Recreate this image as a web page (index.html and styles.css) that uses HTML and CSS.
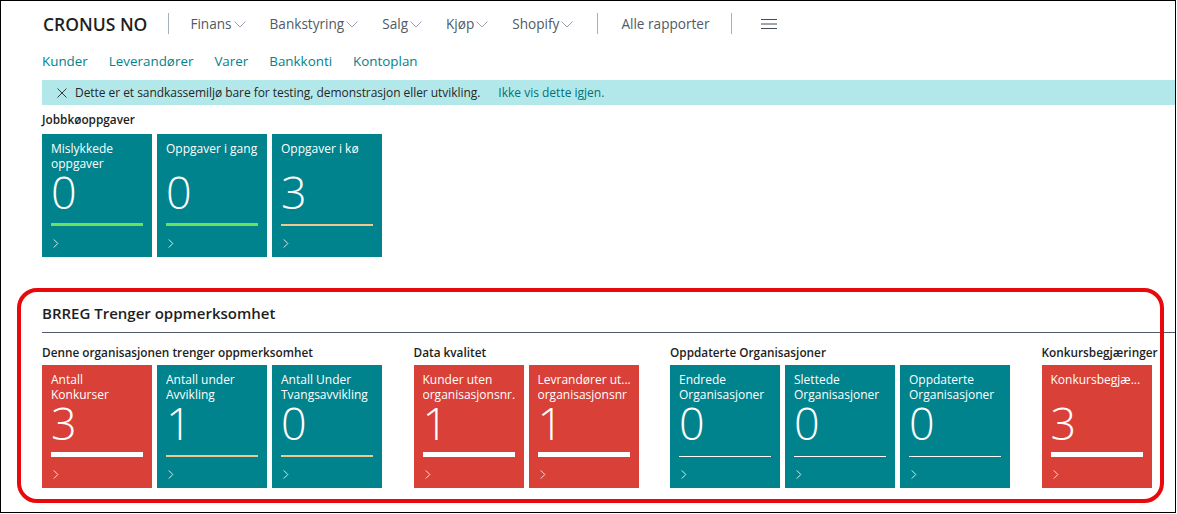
FILE: index.html
```html
<!DOCTYPE html>
<html lang="no">
<head>
<meta charset="utf-8">
<title>CRONUS NO - Rollesenter</title>
<link rel="stylesheet" href="styles.css">
</head>
<body>
<div class="frame">
  <header class="topnav">
    <span class="brand">CRONUS NO</span>
    <span class="sep"></span>
    <nav class="menu">
      <span class="menu-item">Finans<svg class="chev" viewBox="0 0 12 7"><path d="M0.5 0.5 L6 6 L11.5 0.5"/></svg></span>
      <span class="menu-item">Bankstyring<svg class="chev" viewBox="0 0 12 7"><path d="M0.5 0.5 L6 6 L11.5 0.5"/></svg></span>
      <span class="menu-item">Salg<svg class="chev" viewBox="0 0 12 7"><path d="M0.5 0.5 L6 6 L11.5 0.5"/></svg></span>
      <span class="menu-item">Kjøp<svg class="chev" viewBox="0 0 12 7"><path d="M0.5 0.5 L6 6 L11.5 0.5"/></svg></span>
      <span class="menu-item">Shopify<svg class="chev" viewBox="0 0 12 7"><path d="M0.5 0.5 L6 6 L11.5 0.5"/></svg></span>
    </nav>
    <span class="sep"></span>
    <span class="menu-item reports">Alle rapporter</span>
    <span class="sep"></span>
    <span class="hamburger"><svg viewBox="0 0 16 10"><path d="M0 0.5 H16 M0 5 H16 M0 9.5 H16"/></svg></span>
  </header>

  <nav class="quicklinks">
    <a class="ql">Kunder</a>
    <a class="ql">Leverandører</a>
    <a class="ql">Varer</a>
    <a class="ql">Bankkonti</a>
    <a class="ql">Kontoplan</a>
  </nav>

  <div class="banner">
    <svg class="banner-x" viewBox="0 0 10 10"><path d="M0.5 0.5 L9.5 9.5 M9.5 0.5 L0.5 9.5"/></svg>
    <span class="banner-text">Dette er et sandkassemiljø bare for testing, demonstrasjon eller utvikling.</span>
    <a class="banner-link">Ikke vis dette igjen.</a>
  </div>

  <section class="jobq">
    <h2 class="group-title">Jobbkøoppgaver</h2>
    <div class="tiles">
      <div class="tile teal">
        <div class="tile-label">Mislykkede oppgaver</div>
        <div class="tile-value">0</div>
        <div class="tile-meter"><span class="bar green"></span></div>
        <div class="tile-go"><svg viewBox="0 0 6 10"><path d="M0.5 0.5 L5 5 L0.5 9.5"/></svg></div>
      </div>
      <div class="tile teal">
        <div class="tile-label">Oppgaver i gang</div>
        <div class="tile-value">0</div>
        <div class="tile-meter"><span class="bar green"></span></div>
        <div class="tile-go"><svg viewBox="0 0 6 10"><path d="M0.5 0.5 L5 5 L0.5 9.5"/></svg></div>
      </div>
      <div class="tile teal">
        <div class="tile-label">Oppgaver i kø</div>
        <div class="tile-value">3</div>
        <div class="tile-meter"><span class="bar tan"></span></div>
        <div class="tile-go"><svg viewBox="0 0 6 10"><path d="M0.5 0.5 L5 5 L0.5 9.5"/></svg></div>
      </div>
    </div>
  </section>

  <section class="brreg">
    <h1 class="part-title">BRREG Trenger oppmerksomhet</h1>
    <div class="groups">
      <div class="group">
        <h2 class="group-title">Denne organisasjonen trenger oppmerksomhet</h2>
        <div class="tiles">
          <div class="tile red">
            <div class="tile-label">Antall Konkurser</div>
            <div class="tile-value">3</div>
            <div class="tile-meter"><span class="bar white-thick"></span></div>
            <div class="tile-go"><svg viewBox="0 0 6 10"><path d="M0.5 0.5 L5 5 L0.5 9.5"/></svg></div>
          </div>
          <div class="tile teal">
            <div class="tile-label">Antall under Avvikling</div>
            <div class="tile-value">1</div>
            <div class="tile-meter"><span class="bar tan"></span></div>
            <div class="tile-go"><svg viewBox="0 0 6 10"><path d="M0.5 0.5 L5 5 L0.5 9.5"/></svg></div>
          </div>
          <div class="tile teal">
            <div class="tile-label">Antall Under Tvangsavvikling</div>
            <div class="tile-value">0</div>
            <div class="tile-meter"><span class="bar tan"></span></div>
            <div class="tile-go"><svg viewBox="0 0 6 10"><path d="M0.5 0.5 L5 5 L0.5 9.5"/></svg></div>
          </div>
        </div>
      </div>
      <div class="group">
        <h2 class="group-title">Data kvalitet</h2>
        <div class="tiles">
          <div class="tile red">
            <div class="tile-label">Kunder uten organisasjonsnr.</div>
            <div class="tile-value">1</div>
            <div class="tile-meter"><span class="bar white-thick"></span></div>
            <div class="tile-go"><svg viewBox="0 0 6 10"><path d="M0.5 0.5 L5 5 L0.5 9.5"/></svg></div>
          </div>
          <div class="tile red">
            <div class="tile-label"><span class="line">Levrandører ut...</span><span class="line">organisasjonsnr</span></div>
            <div class="tile-value">1</div>
            <div class="tile-meter"><span class="bar white-thick"></span></div>
            <div class="tile-go"><svg viewBox="0 0 6 10"><path d="M0.5 0.5 L5 5 L0.5 9.5"/></svg></div>
          </div>
        </div>
      </div>
      <div class="group">
        <h2 class="group-title">Oppdaterte Organisasjoner</h2>
        <div class="tiles">
          <div class="tile teal">
            <div class="tile-label">Endrede Organisasjoner</div>
            <div class="tile-value">0</div>
            <div class="tile-meter"><span class="bar white-thin"></span></div>
            <div class="tile-go"><svg viewBox="0 0 6 10"><path d="M0.5 0.5 L5 5 L0.5 9.5"/></svg></div>
          </div>
          <div class="tile teal">
            <div class="tile-label">Slettede Organisasjoner</div>
            <div class="tile-value">0</div>
            <div class="tile-meter"><span class="bar white-thin"></span></div>
            <div class="tile-go"><svg viewBox="0 0 6 10"><path d="M0.5 0.5 L5 5 L0.5 9.5"/></svg></div>
          </div>
          <div class="tile teal">
            <div class="tile-label">Oppdaterte Organisasjoner</div>
            <div class="tile-value">0</div>
            <div class="tile-meter"><span class="bar white-thin"></span></div>
            <div class="tile-go"><svg viewBox="0 0 6 10"><path d="M0.5 0.5 L5 5 L0.5 9.5"/></svg></div>
          </div>
        </div>
      </div>
      <div class="group">
        <h2 class="group-title">Konkursbegjæringer</h2>
        <div class="tiles">
          <div class="tile red">
            <div class="tile-label"><span class="line">Konkursbegjæ...</span></div>
            <div class="tile-value">3</div>
            <div class="tile-meter"><span class="bar white-thick"></span></div>
            <div class="tile-go"><svg viewBox="0 0 6 10"><path d="M0.5 0.5 L5 5 L0.5 9.5"/></svg></div>
          </div>
        </div>
      </div>
    </div>
  </section>

  <div class="highlight"></div>
</div>
</body>
</html>
```

FILE: styles.css
```css
* { box-sizing: border-box; }
html, body { margin: 0; padding: 0; background: #fff; }
body {
  font-family: "Open Sans", "Noto Sans", sans-serif;
  color: #212121;
  overflow: hidden;
}
.frame {
  position: relative;
  width: 1176px;
  height: 513px;
  border: 1px solid #000;
  padding-left: 41px;
  overflow: hidden;
}

/* top navigation */
.topnav {
  display: flex;
  align-items: center;
  height: 45px;
  padding-left: 1px;
}
.brand {
  font-size: 17.5px;
  font-weight: 600;
  color: #1f1f1f;
}
.sep {
  width: 1px;
  height: 21px;
  background: #a9b0b9;
  margin: 0 21px 0 21px;
}
.menu { display: flex; align-items: center; gap: 24px; }
.menu-item {
  display: inline-flex;
  align-items: center;
  font-size: 13.6px;
  color: #505a66;
}
.chev {
  width: 12px;
  height: 7px;
  margin-left: 2px;
  margin-top: 1px;
  fill: none;
  stroke: #9aa6b5;
  stroke-width: 1;
}
.menu + .sep { margin-left: 24px; margin-right: 23px; }
.hamburger { display: inline-flex; margin-left: 8px; }
.hamburger svg {
  width: 16px;
  height: 10px;
  fill: none;
  stroke: #444c56;
  stroke-width: 1;
}

/* quick links */
.quicklinks {
  display: flex;
  gap: 21px;
  height: 29px;
  align-items: center;
}
.ql {
  font-size: 13.4px;
  color: #00828c;
}

/* banner */
.banner {
  margin-top: 5px;
  height: 25px;
  background: #b3e8ea;
  display: flex;
  align-items: center;
  padding-left: 15px;
  font-size: 12px;
}
.banner-x {
  width: 10px;
  height: 10px;
  fill: none;
  stroke: #3a3a3a;
  stroke-width: 1;
  margin-right: 8px;
}
.banner-text { color: #262626; letter-spacing: -0.05px; }
.banner-link { color: #00727b; margin-left: 18px; }

/* groups and tiles */
.group-title {
  margin: 0;
  font-size: 11.8px;
  font-weight: 600;
  line-height: 18px;
  color: #1e1e1e;
  white-space: nowrap;
}
.jobq { padding-top: 5px; }
.jobq .group-title { margin-bottom: 6px; }
.tiles { display: flex; gap: 5px; }
.tile {
  width: 110px;
  height: 123px;
  padding: 7px 9px 0;
  color: #fff;
  display: flex;
  flex-direction: column;
}
.tile.teal { background: #00838c; }
.tile.red { background: #d84038; }
.tile-label {
  height: 30px;
  font-size: 12px;
  line-height: 15px;
  overflow: hidden;
}
.line { display: block; white-space: nowrap; }
.tile-value {
  height: 42px;
  font-size: 45px;
  font-weight: 300;
  line-height: 42px;
}
.tile-meter {
  height: 13px;
  display: flex;
  align-items: flex-end;
}
.bar { display: block; width: 100%; }
.bar.green { height: 3px; background: #6ce15c; }
.bar.tan { height: 2px; background: #edc98d; }
.bar.white-thick { height: 5px; background: #fff; }
.bar.white-thin { height: 1px; background: #fff; }
.tile-go { padding: 13px 0 0 2px; }
.tile-go svg {
  display: block;
  width: 6px;
  height: 9px;
  fill: none;
  stroke: #eef8f8;
  stroke-width: 1;
}

.brreg { margin-top: 45px; }
.part-title {
  margin: 0;
  font-size: 15px;
  font-weight: 600;
  line-height: 20px;
  padding: 1px 0 9px;
  border-bottom: 1px solid #4f5b6a;
  color: #1e1e1e;
}
.groups {
  display: flex;
  gap: 31.5px;
  padding-top: 10px;
}
.group .group-title { margin-bottom: 4px; }

/* annotation overlay */
.highlight {
  position: absolute;
  left: 16px;
  top: 287px;
  width: 1147px;
  height: 215px;
  border: 4px solid #e8090c;
  border-radius: 20px;
  pointer-events: none;
}
```
